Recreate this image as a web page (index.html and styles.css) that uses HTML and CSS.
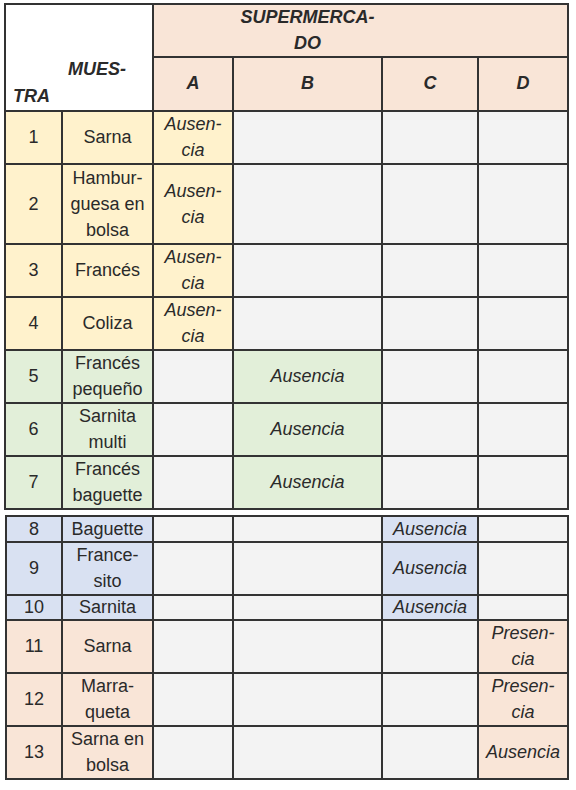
FILE: index.html
```html
<!DOCTYPE html>
<html lang="es">
<head>
<meta charset="utf-8">
<title>Muestras</title>
<link rel="stylesheet" href="styles.css">
</head>
<body>
<table class="grid first">
  <colgroup>
    <col class="c-num"><col class="c-name"><col class="c-a"><col class="c-b"><col class="c-c"><col class="c-d">
  </colgroup>
  <tr class="hr1">
    <td class="blank" colspan="2" rowspan="2"><span class="mues">MUES-</span><br>TRA</td>
    <td class="hd super" colspan="4">SUPERMERCA-<br>DO</td>
  </tr>
  <tr class="hr2">
    <td class="hd">A</td><td class="hd">B</td><td class="hd">C</td><td class="hd">D</td>
  </tr>
  <tr class="h2">
    <td class="y">1</td><td class="y">Sarna</td><td class="y it">Ausen-<br>cia</td><td class="e"></td><td class="e"></td><td class="e"></td>
  </tr>
  <tr class="h3">
    <td class="y">2</td><td class="y">Hambur-<br>guesa en<br>bolsa</td><td class="y it">Ausen-<br>cia</td><td class="e"></td><td class="e"></td><td class="e"></td>
  </tr>
  <tr class="h2">
    <td class="y">3</td><td class="y">Francés</td><td class="y it">Ausen-<br>cia</td><td class="e"></td><td class="e"></td><td class="e"></td>
  </tr>
  <tr class="h2">
    <td class="y">4</td><td class="y">Coliza</td><td class="y it">Ausen-<br>cia</td><td class="e"></td><td class="e"></td><td class="e"></td>
  </tr>
  <tr class="h2">
    <td class="g">5</td><td class="g">Francés<br>pequeño</td><td class="e"></td><td class="g it">Ausencia</td><td class="e"></td><td class="e"></td>
  </tr>
  <tr class="h2">
    <td class="g">6</td><td class="g">Sarnita<br>multi</td><td class="e"></td><td class="g it">Ausencia</td><td class="e"></td><td class="e"></td>
  </tr>
  <tr class="h2">
    <td class="g">7</td><td class="g">Francés<br>baguette</td><td class="e"></td><td class="g it">Ausencia</td><td class="e"></td><td class="e"></td>
  </tr>
</table>
<table class="grid second">
  <colgroup>
    <col class="c-num2"><col class="c-name"><col class="c-a"><col class="c-b"><col class="c-c2"><col class="c-d">
  </colgroup>
  <tr class="h1 tall">
    <td class="bl">8</td><td class="bl">Baguette</td><td class="e"></td><td class="e"></td><td class="bl it">Ausencia</td><td class="e"></td>
  </tr>
  <tr class="h2">
    <td class="bl">9</td><td class="bl">France-<br>sito</td><td class="e"></td><td class="e"></td><td class="bl it">Ausencia</td><td class="e"></td>
  </tr>
  <tr class="h1">
    <td class="bl">10</td><td class="bl">Sarnita</td><td class="e"></td><td class="e"></td><td class="bl it">Ausencia</td><td class="e"></td>
  </tr>
  <tr class="h2">
    <td class="p">11</td><td class="p">Sarna</td><td class="e"></td><td class="e"></td><td class="e"></td><td class="p it">Presen-<br>cia</td>
  </tr>
  <tr class="h2">
    <td class="p">12</td><td class="p">Marra-<br>queta</td><td class="e"></td><td class="e"></td><td class="e"></td><td class="p it">Presen-<br>cia</td>
  </tr>
  <tr class="h2">
    <td class="p">13</td><td class="p">Sarna en<br>bolsa</td><td class="e"></td><td class="e"></td><td class="e"></td><td class="p it">Ausencia</td>
  </tr>
</table>
</body>
</html>
```
FILE: styles.css
```css
html, body {
  background: #ffffff;
}
body {
  margin: 0;
  padding: 3px 0 0 4px;
  font-family: "Liberation Sans", Arial, sans-serif;
  font-size: 18px;
  color: #2a2a2a;
}
.grid {
  border-collapse: collapse;
  table-layout: fixed;
  width: 565px;
}
.grid td {
  border: 2px solid #333333;
  padding: 0 4px;
  line-height: 25.5px;
  text-align: center;
  vertical-align: middle;
}
.grid.second {
  margin-top: 5px;
  margin-left: 1px;
  width: 564px;
}
.c-num { width: 57px; }
.c-num2 { width: 56px; }
.c-name { width: 91px; }
.c-a { width: 80px; }
.c-b { width: 149px; }
.c-c { width: 96px; }
.c-c2 { width: 96px; }
.c-d { width: 90px; }

.grid .h1 td { line-height: 23px; }
.grid .h1.tall td { line-height: 24px; }
.hr1 { height: 52px; }
.hr2 { height: 54px; }
.h2 { height: 53px; }
.h3 { height: 80px; }
.grid .h3 td { line-height: 26px; }

.grid .blank {
  background: #ffffff;
  text-align: left;
  vertical-align: bottom;
  padding: 0 4px 0 7px;
  line-height: 27px;
  font-weight: bold;
  font-style: italic;
}
.mues {
  padding-left: 55px;
}
.grid .hd {
  background: #f9e5d7;
  font-weight: bold;
  font-style: italic;
}
.grid .super {
  padding: 0 110px 0 4px;
}
.it { font-style: italic; }
.y { background: #fff2cc; }
.g { background: #e2efd9; }
.bl { background: #d9e1f2; }
.p { background: #f9e5d7; }
.e { background: #f3f3f3; }
```
